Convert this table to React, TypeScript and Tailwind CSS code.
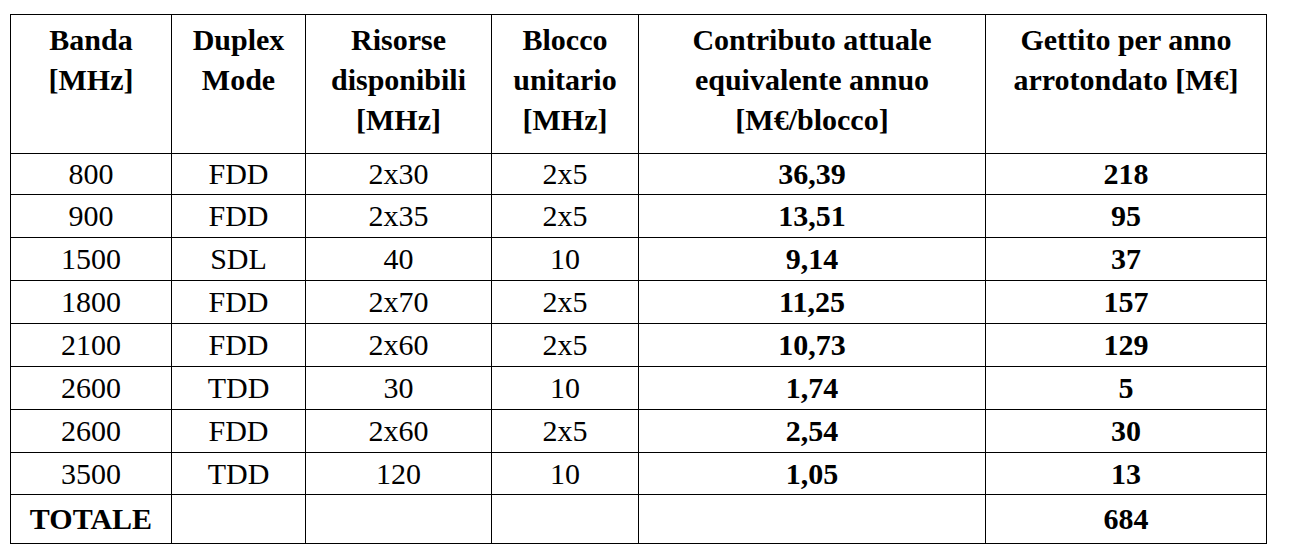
const header = [
  ["Banda", "[MHz]"],
  ["Duplex", "Mode"],
  ["Risorse", "disponibili", "[MHz]"],
  ["Blocco", "unitario", "[MHz]"],
  ["Contributo attuale", "equivalente annuo", "[M€/blocco]"],
  ["Gettito per anno", "arrotondato [M€]"],
];

const rows = [
  ["800", "FDD", "2x30", "2x5", "36,39", "218"],
  ["900", "FDD", "2x35", "2x5", "13,51", "95"],
  ["1500", "SDL", "40", "10", "9,14", "37"],
  ["1800", "FDD", "2x70", "2x5", "11,25", "157"],
  ["2100", "FDD", "2x60", "2x5", "10,73", "129"],
  ["2600", "TDD", "30", "10", "1,74", "5"],
  ["2600", "FDD", "2x60", "2x5", "2,54", "30"],
  ["3500", "TDD", "120", "10", "1,05", "13"],
  ["TOTALE", "", "", "", "", "684"],
];

const rowHeights = ["h-[41px]", "h-[43px]", "h-[43px]", "h-[43px]", "h-[43px]", "h-[43px]", "h-[43px]", "h-[42px]", "h-[49px]"];

const cell = "border-r border-b border-black text-center";

export default function App() {
  return (
    <div className="min-h-[551px] bg-white pl-[10px] pt-[14px] font-['Liberation_Serif'] text-[30px] text-black">
      <div className="grid w-fit grid-cols-[162px_134px_186px_147px_347px_281px]">
        {header.map((lines, i) => (
          <div
            key={i}
            className={`${cell} h-[140px] border-t pt-[5px] font-bold leading-[40px] ${i === 0 ? "border-l" : ""}`}
          >
            {lines.map((l) => (
              <div key={l}>{l}</div>
            ))}
          </div>
        ))}
        {rows.map((r, ri) =>
          r.map((c, ci) => (
            <div
              key={`${ri}-${ci}`}
              className={`${cell} ${rowHeights[ri]} flex items-center justify-center leading-[34px] ${ci === 0 ? "border-l" : ""} ${ci >= 4 || ri === 8 ? "font-bold" : ""}`}
            >
              {c}
            </div>
          ))
        )}
      </div>
    </div>
  );
}
